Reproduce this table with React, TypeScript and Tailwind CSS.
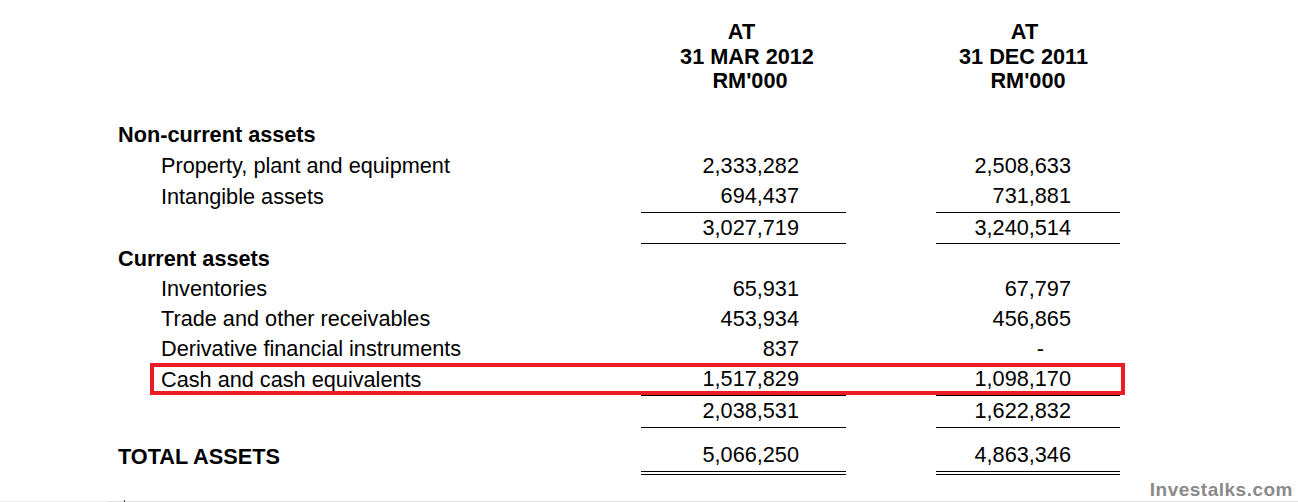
const rows1 = [
  { label: "Property, plant and equipment", a: "2,333,282", b: "2,508,633" },
  { label: "Intangible assets", a: "694,437", b: "731,881" },
];

const rows2 = [
  { label: "Inventories", a: "65,931", b: "67,797" },
  { label: "Trade and other receivables", a: "453,934", b: "456,865" },
  { label: "Derivative financial instruments", a: "837", b: "-" },
];

function Row({
  label,
  a,
  b,
  indent = true,
  bold = false,
  lines = "",
  h = "h-[30px]",
}: {
  label: string;
  a?: string;
  b?: string;
  indent?: boolean;
  bold?: boolean;
  lines?: string;
  h?: string;
}) {
  return (
    <div className={`flex ${h} items-center`}>
      <div className={`w-[523px] ${indent ? "pl-[43px]" : ""} ${bold ? "font-bold" : ""}`}>
        {label}
      </div>
      <div className={`w-[205px] h-full flex items-center justify-end pr-[47px] ${lines}`}>{a}</div>
      <div className="w-[90px]" />
      <div
        className={`w-[184px] h-full flex items-center justify-end ${b === "-" ? "pr-[76px]" : "pr-[49px]"} ${lines}`}
      >
        {b}
      </div>
    </div>
  );
}

export default function App() {
  return (
    <div
      className="relative w-[1298px] h-[502px] bg-white text-black text-[21.7px] overflow-hidden"
      style={{ fontFamily: '"Liberation Sans", Arial, sans-serif' }}
    >
      <div className="pl-[118px] pt-[20px]">
        {/* Column headers */}
        <div className="flex font-bold leading-[24.5px]">
          <div className="w-[523px]" />
          <div className="w-[205px] flex flex-col items-center">
            <span className="pr-[4px]">AT</span>
            <span className="pl-[7px]">31 MAR 2012</span>
            <span className="pl-[13px]">RM'000</span>
          </div>
          <div className="w-[90px]" />
          <div className="w-[184px] flex flex-col items-center">
            <span className="pr-[7px]">AT</span>
            <span className="pr-[9px]">31 DEC 2011</span>
            <span>RM'000</span>
          </div>
        </div>

        <div className="mt-[26.5px]">
          <Row label="Non-current assets" indent={false} bold h="h-[31px]" />
          <Row {...rows1[0]} />
          <Row {...rows1[1]} h="h-[32px]" lines="border-b border-black" />
          <Row label="" a="3,027,719" b="3,240,514" h="h-[31px]" lines="border-b border-black" />
          <Row label="Current assets" indent={false} bold />
          {rows2.map((r) => (
            <Row key={r.label} {...r} />
          ))}
          <div className="relative">
            <Row label="Cash and cash equivalents" a="1,517,829" b="1,098,170" h="h-[32px]" lines="border-b border-black" />
            <div className="absolute left-[32px] top-[-1px] w-[975px] h-[32px] border-4 border-[#ed1c24]" />
          </div>
          <Row label="" a="2,038,531" b="1,622,832" h="h-[32px]" lines="border-b border-black" />
          <div className="mt-[11px]">
            <Row
              label="TOTAL ASSETS"
              indent={false}
              bold
              a="5,066,250"
              b="4,863,346"
              h="h-[36px]"
              lines="border-b-4 border-double border-black"
            />
          </div>
        </div>
      </div>

      {/* Watermark */}
      <div className="absolute right-[5px] bottom-[3px] leading-[18px] text-[19px] font-bold text-[#8a8a8a] tracking-[0.5px]">
        Investalks.com
      </div>
      <div className="absolute left-0 bottom-0 w-full h-px flex">
        <div className="w-[108px] bg-[#efefef]" />
        <div className="flex-1 bg-[#dddddd]" />
      </div>
      <div className="absolute left-[124px] bottom-0 w-px h-[2px] bg-[#555]" />
    </div>
  );
}
